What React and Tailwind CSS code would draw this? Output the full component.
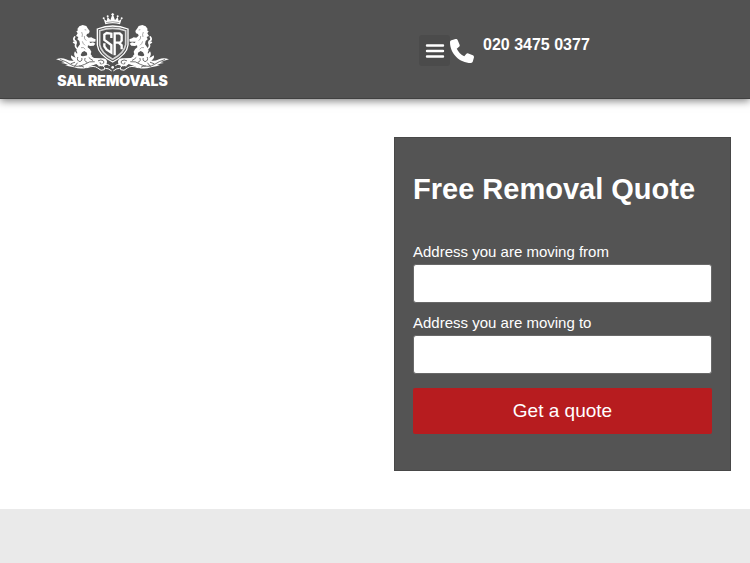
import React, { useState } from 'react';

// Lion, scrolls and leaves for one side of the crest, mirrored for the other
function CrestSide() {
  return (
    <g>
      {/* lion */}
      <path
        fill="#fff"
        d="M82 63 L88 55 L98 51 L109 54 L113 61 L119 69 L117 76 L111 78 L109 83 L116 89 L124 88 L129 91 L137 94 L136 101 L126 101 L118 101 L121 105 L129 103 L136 107 L131 113 L120 114 L114 112 L113 118 L120 124 L124 131 L122 139 L127 145 L112 147 L111 134 L103 129 L96 133 L92 141 L96 148 L77 146 L82 135 L79 127 L84 117 L90 109 L88 99 L82 94 L85 87 L78 84 L83 76 L79 70 L84 67 Z"
      />
      {/* tail */}
      <path
        fill="none"
        stroke="#fff"
        strokeWidth="5"
        strokeLinecap="round"
        d="M86 125 Q74 119 77 109 Q81 100 74 98 Q69 93 74 87 M78 107 L71 103"
      />
      <path
        fill="none"
        stroke="#525252"
        strokeWidth="1.500"
        d="M104 65 L109 66 M95 72 Q99 80 96 87 M103 84 Q102 94 109 98 M97 100 Q99 108 105 112 M93 119 Q101 116 106 124"
      />
      {/* acanthus leaves */}
      <path
        fill="#fff"
        d="M18 154 Q35 147 48 154 Q61 160 71 158 Q60 151 64 142 Q70 148 77 149 Q69 139 75 130 Q83 143 99 145 Q111 143 118 137 Q124 146 132 150 Q143 150 153 151 Q168 149 171 160 Q172 173 157 175 Q144 176 139 168 Q124 173 111 179 Q92 185 72 178 Q54 175 45 171 L54 170 Q42 166 33 165 L43 163 Q30 157 18 154 Z"
      />
      <g fill="none" stroke="#525252" strokeWidth="2.500" strokeLinecap="round">
        <path d="M31 155 Q49 160 61 169 Q80 181 104 169 Q119 158 133 161" />
        <path d="M63 167 L74 163 M74 175 L82 165" />
        <path d="M83 148 Q79 158 90 161 Q99 157 96 151 M105 151 Q101 160 111 163 M117 149 Q122 154 128 157" />
        <path d="M145 158 Q153 153 161 159 Q164 166 156 169 Q149 169 150 164" />
        <path d="M89 174 Q96 174 101 177" />
      </g>
      {/* ribbon under the shield */}
      <path
        fill="none"
        stroke="#fff"
        strokeWidth="3"
        strokeLinecap="round"
        d="M111 179 Q132 171 143 180 Q153 191 163 185 Q166 178 160 174 M147 174 Q168 164 178 172 M167 181 Q174 180 184 188"
      />
    </g>
  );
}

function Logo() {
  return (
    <a href="#" className="flex flex-col items-center text-white no-underline">
      <svg viewBox="18 15 339 180" className="h-[60px] w-[113px]" aria-hidden="true">
        <CrestSide />
        <g transform="translate(375 0) scale(-1 1)">
          <CrestSide />
        </g>
        {/* crown */}
        <path
          fill="#fff"
          d="M166 49 L161 32 L170 39 L173 26 L181 37 L186 22 L183 19 L188 15 L193 19 L190 22 L195 37 L203 26 L206 39 L215 32 L210 49 Q188 43 166 49 Z"
        />
        <g fill="#fff">
          <circle cx="161" cy="31" r="3" />
          <circle cx="173" cy="25" r="3" />
          <circle cx="203" cy="25" r="3" />
          <circle cx="215" cy="31" r="3" />
        </g>
        <path fill="none" stroke="#777" strokeWidth="2" d="M168 44 Q188 38 208 44" />
        {/* shield */}
        <path
          fill="#525252"
          stroke="#fff"
          strokeWidth="4"
          d="M188 54 Q165 54 142 63 L142 111 Q145 140 188 162 Q231 140 234 111 L234 63 Q211 54 188 54 Z"
        />
        <path
          fill="none"
          stroke="#d5d5d5"
          strokeWidth="5"
          d="M188 61 Q168 61 149 68 L149 110 Q153 135 188 154 Q223 135 227 110 L227 68 Q208 61 188 61 Z"
        />
        {/* shield monogram */}
        <g fill="none" stroke="#fff" strokeWidth="7" strokeLinejoin="miter">
          <path d="M184 90 L184 77 L170 75 L163 80 L163 96 L184 111 L184 134 L170 125 L163 115 L163 106" />
          <path d="M194 142 L194 76 L209 76 L215 82 L215 98 L210 104 L194 104 M206 104 L215 112 L215 124" />
        </g>
        <circle cx="188" cy="178" r="4" fill="#fff" />
      </svg>
      <span className="font-['Inter',sans-serif] text-[14px] leading-4 font-black whitespace-nowrap">
        SAL REMOVALS
      </span>
    </a>
  );
}

function Header() {
  return (
    <header className="flex h-[99px] items-start border-b border-[#414141] bg-[#525252] text-white shadow-[0_2px_8px_rgba(0,0,0,0.5)]">
      <div className="flex w-[30%] justify-center pt-[13px]">
        <Logo />
      </div>
      <div className="ml-auto flex w-[331px] items-start pt-[35px]">
        <button
          type="button"
          aria-label="Menu"
          className="flex size-[31px] items-center justify-center rounded-[3px] bg-[#4b4b4b]"
        >
          <svg viewBox="0 0 20 16" className="h-4 w-5" fill="none" stroke="#fff" strokeWidth="2.400" strokeLinecap="round">
            <path d="M2 2.500 H18 M2 8 H18 M2 13.500 H18" />
          </svg>
        </button>
        <a href="tel:02034750377" className="flex text-white">
          <svg viewBox="0 0 512 512" className="mt-1 size-6" fill="#fff" aria-hidden="true">
            <path d="M164.900 24.600c-7.700-18.600-28-28.500-47.400-23.200l-88 24C12.100 30.200 0 46 0 64c0 247.400 200.600 448 448 448 18 0 33.800-12.100 38.600-29.500l24-88c5.300-19.400-4.600-39.700-23.200-47.400l-96-40c-16.300-6.800-35.200-2.100-46.300 11.600L304.700 368C234.300 334.700 177.300 277.700 144 207.300l49.300-40.300c13.700-11.200 18.400-30 11.600-46.300l-40-96z" />
          </svg>
          <span className="ml-[9px] text-base leading-5 font-bold whitespace-nowrap">020 3475 0377</span>
        </a>
      </div>
    </header>
  );
}

function AddressField({ id, label, value, onChange }) {
  return (
    <div>
      <label htmlFor={id} className="block text-[15px] leading-6">
        {label}
      </label>
      <input
        id={id}
        type="text"
        value={value}
        onChange={(e) => onChange(e.target.value)}
        className="block h-[39px] w-full rounded-[3px] border border-[#696969] bg-white px-3 text-base text-[#333333]"
      />
    </div>
  );
}

function QuoteForm() {
  const [from, setFrom] = useState('');
  const [to, setTo] = useState('');

  return (
    <form
      onSubmit={(e) => e.preventDefault()}
      className="w-[337px] border border-[#484848] bg-[#545454] px-[18px] pt-[31px] pb-9 text-white"
    >
      <h1 className="text-[29px] leading-10 font-bold whitespace-nowrap">Free Removal Quote</h1>
      <div className="mt-[31px] flex flex-col gap-2">
        <AddressField id="from" label="Address you are moving from" value={from} onChange={setFrom} />
        <AddressField id="to" label="Address you are moving to" value={to} onChange={setTo} />
      </div>
      <button
        type="submit"
        className="mt-[14px] h-[46px] w-full rounded-[2px] bg-[#b71c1f] text-[19px] leading-6 text-white"
      >
        Get a quote
      </button>
    </form>
  );
}

function App() {
  return (
    <div className="flex min-h-screen flex-col bg-white font-['Liberation_Sans',Arial,sans-serif]">
      <Header />
      <main className="flex justify-end px-[19px] py-[38px]">
        <QuoteForm />
      </main>
      <section className="grow bg-[#eaeaea]" />
    </div>
  );
}

export default App;
